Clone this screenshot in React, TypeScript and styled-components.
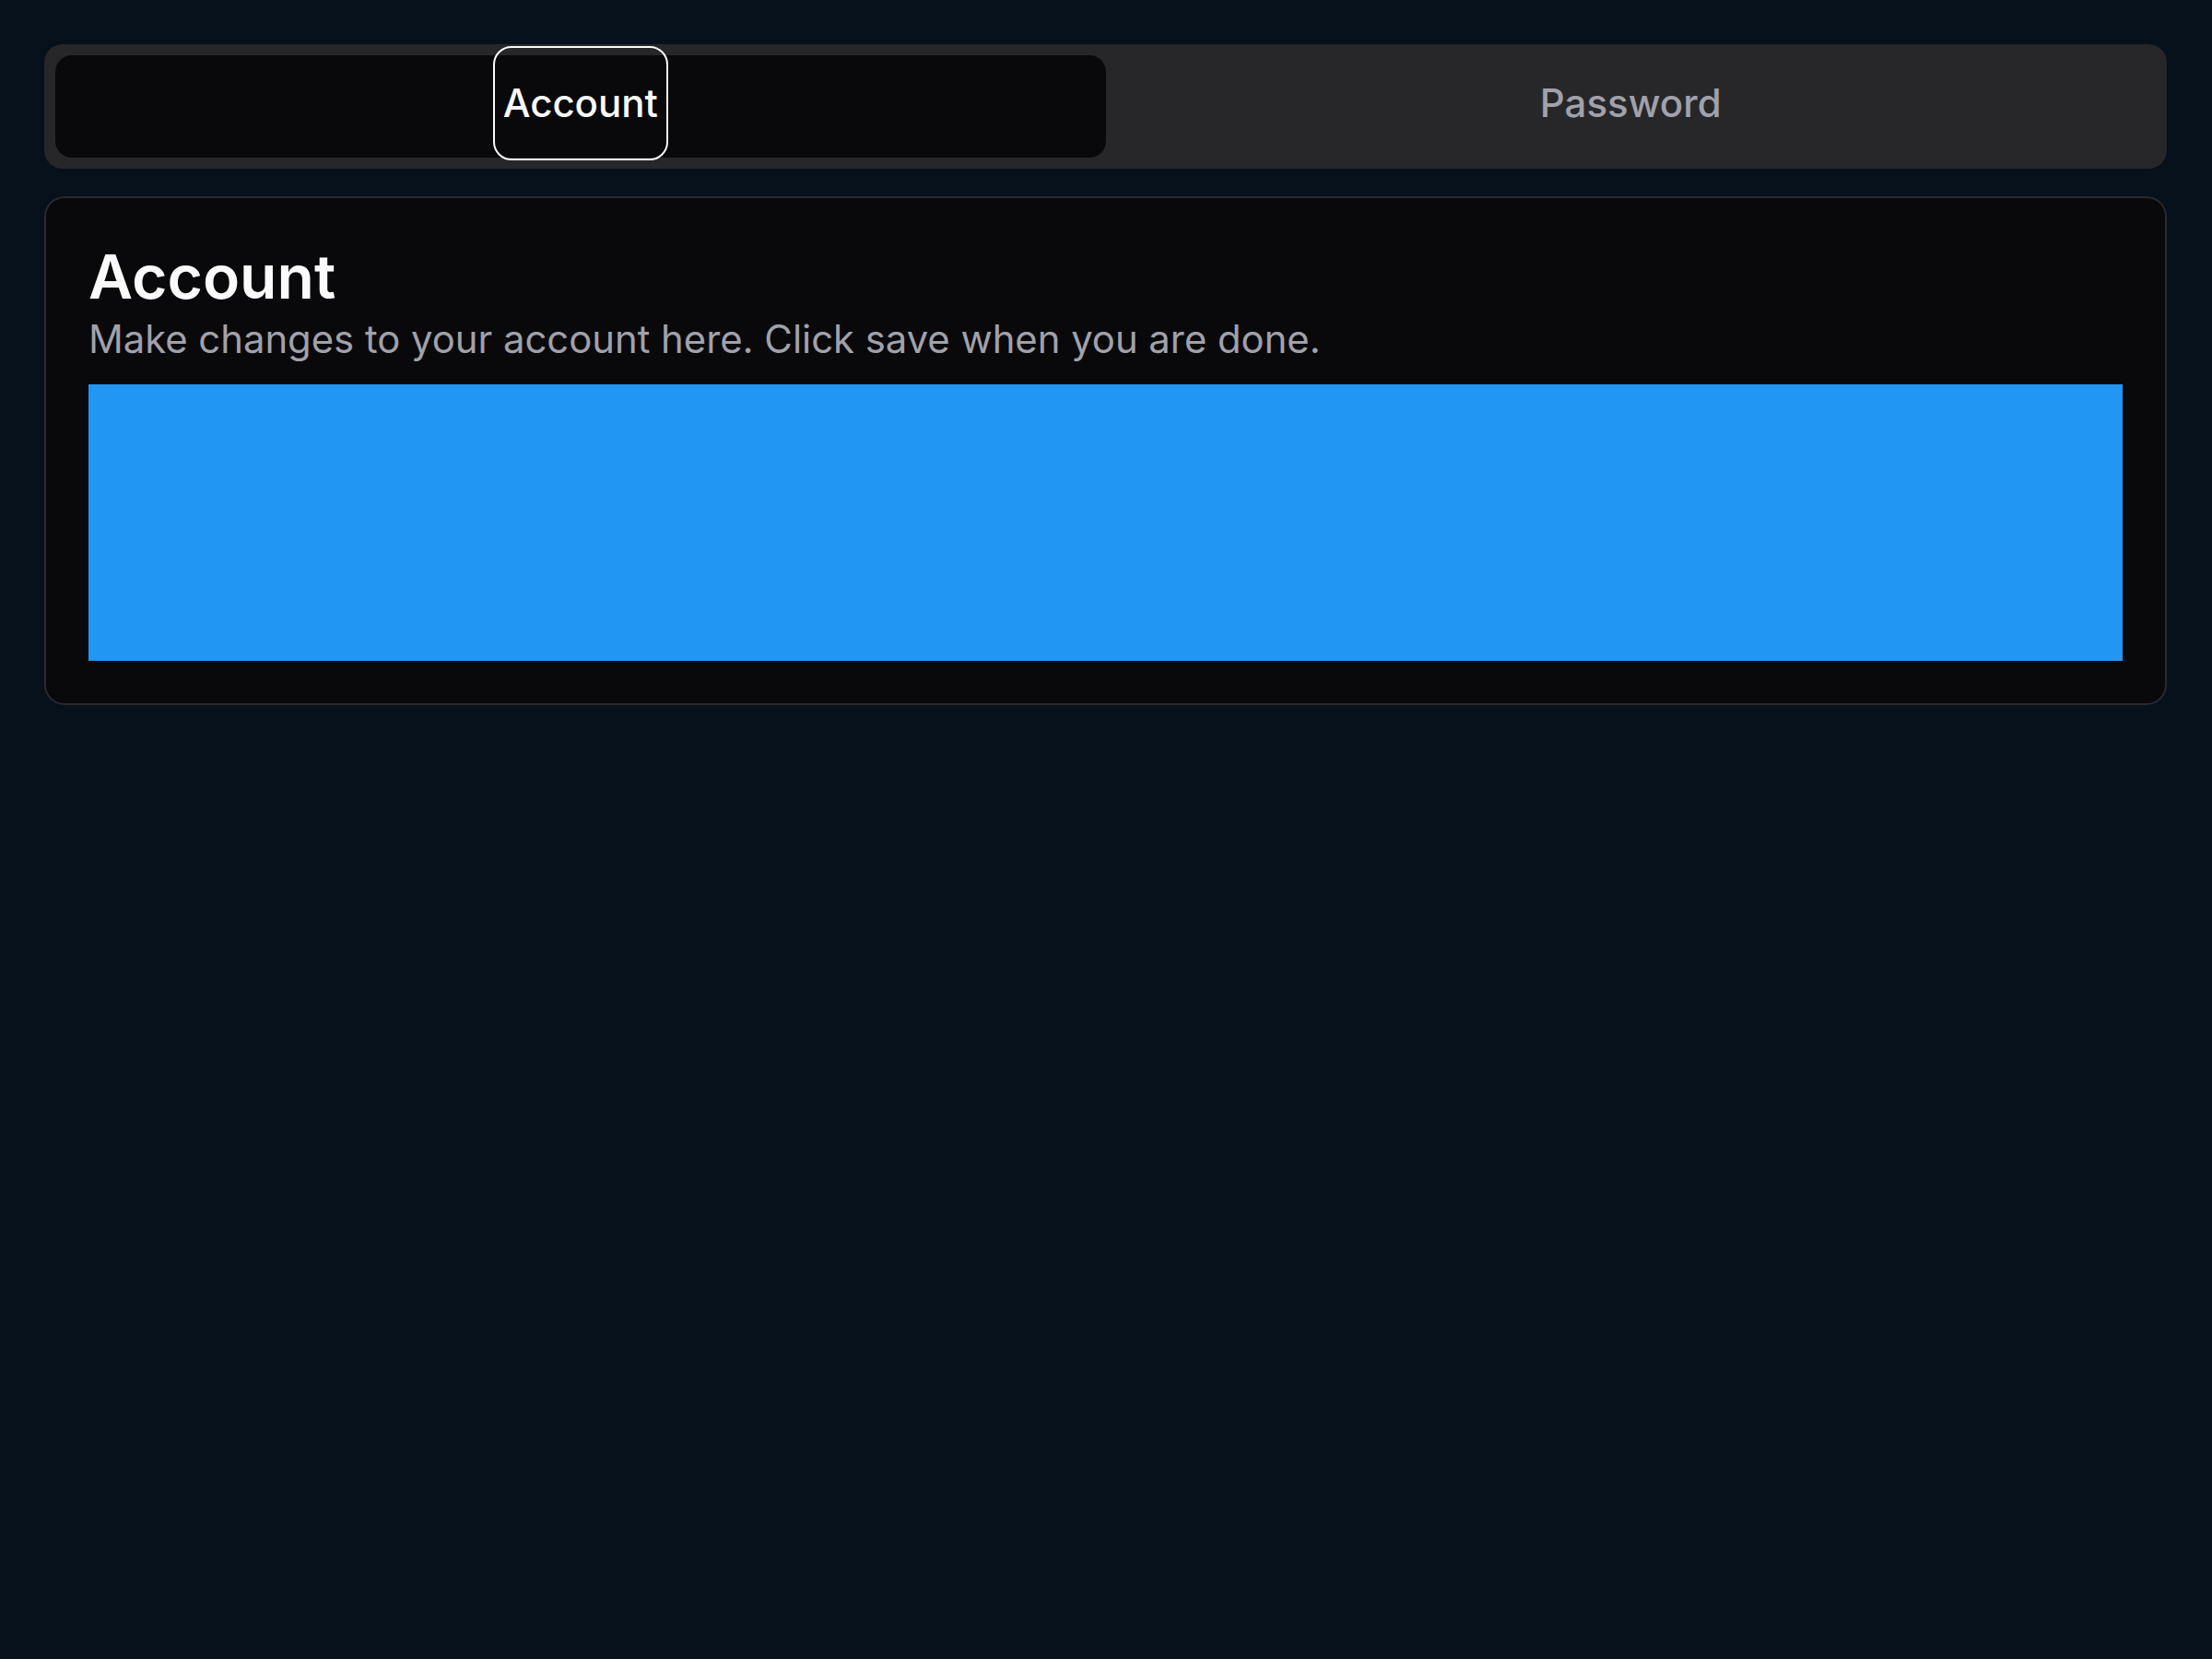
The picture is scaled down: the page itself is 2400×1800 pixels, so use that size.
import React, { useState } from "react";
import styled, { createGlobalStyle } from "styled-components";

const Global = createGlobalStyle`
  html, body {
    margin: 0;
    padding: 0;
    background: #07111c;
  }
  body {
    font-family: Inter, "Noto Sans", "Liberation Sans", sans-serif;
    -webkit-font-smoothing: antialiased;
  }
  * { box-sizing: border-box; }
`;

const Page = styled.div`
  padding: 48px 49px 48px 48px;
  display: flex;
  flex-direction: column;
  gap: 30px;
`;

const TabList = styled.div`
  display: grid;
  grid-template-columns: 1fr 1fr;
  height: 135px;
  padding: 12px;
  background: #27272a;
  border-radius: 20px;
`;

const Trigger = styled.button<{ $active: boolean }>`
  display: flex;
  align-items: center;
  justify-content: center;
  height: 111px;
  border: none;
  margin: 0;
  padding: 0;
  border-radius: 18px;
  background: ${(p) => (p.$active ? "#09090b" : "transparent")};
  color: ${(p) => (p.$active ? "#fafafa" : "#a1a1aa")};
  font-family: inherit;
  font-size: 42px;
  font-weight: 500;
  line-height: 1;
  cursor: pointer;
  overflow: visible;
`;

const TriggerLabel = styled.span<{ $focused: boolean }>`
  display: inline-flex;
  align-items: center;
  flex-shrink: 0;
  height: 124px;
  margin-bottom: 7px;
  padding: 0 9px;
  border-radius: 20px;
  border: 2px solid ${(p) => (p.$focused ? "#fafafa" : "transparent")};
`;

const Card = styled.section`
  background: #09090b;
  border: 2px solid #2a2a2e;
  border-radius: 22px;
  padding: 46px;
  display: flex;
  flex-direction: column;
`;

const Title = styled.h2`
  margin: 0;
  color: #fafafa;
  font-size: 66px;
  font-weight: 600;
  line-height: 78px;
`;

const Description = styled.p`
  margin: 0;
  color: #a1a1aa;
  font-size: 41.8px;
  font-weight: 400;
  line-height: 58px;
`;

const Content = styled.div`
  margin-top: 20px;
  height: 300px;
  background: #2196f3;
`;

export default function App() {
  const [tab, setTab] = useState<"account" | "password">("account");
  return (
    <>
      <Global />
      <Page>
        <TabList role="tablist">
          <Trigger $active={tab === "account"} onClick={() => setTab("account")}>
            <TriggerLabel $focused={tab === "account"}>Account</TriggerLabel>
          </Trigger>
          <Trigger $active={tab === "password"} onClick={() => setTab("password")}>
            <TriggerLabel $focused={tab === "password"}>Password</TriggerLabel>
          </Trigger>
        </TabList>
        <Card>
          <Title>{tab === "account" ? "Account" : "Password"}</Title>
          <Description>
            {tab === "account"
              ? "Make changes to your account here. Click save when you are done."
              : "Change your password here. After saving, you'll be logged out."}
          </Description>
          <Content />
        </Card>
      </Page>
    </>
  );
}
